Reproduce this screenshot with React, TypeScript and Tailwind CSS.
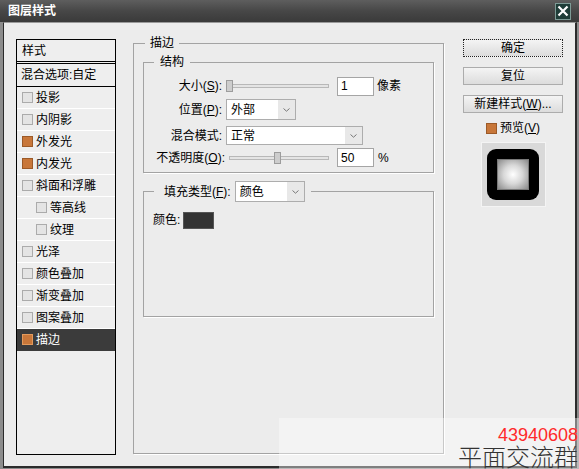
import React from "react";

const font = "font-['Liberation_Sans','Noto_Sans_CJK_SC',sans-serif]";

type Item = { label: string; on?: boolean; sub?: boolean; active?: boolean };

const items: Item[] = [
  { label: "投影" },
  { label: "内阴影" },
  { label: "外发光", on: true },
  { label: "内发光", on: true },
  { label: "斜面和浮雕" },
  { label: "等高线", sub: true },
  { label: "纹理", sub: true },
  { label: "光泽" },
  { label: "颜色叠加" },
  { label: "渐变叠加" },
  { label: "图案叠加" },
  { label: "描边", on: true, active: true },
];

const Check = ({ on, active }: { on?: boolean; active?: boolean }) => (
  <span
    className={
      active
        ? "w-[11px] h-[11px] shrink-0 bg-[#c8773a] border border-[#e39a5c]"
        : on
        ? "w-[11px] h-[11px] shrink-0 bg-[#c8773a] border border-[#9c5a28]"
        : "w-[11px] h-[11px] shrink-0 bg-[#e4e4e4] border border-[#ababab]"
    }
  />
);

const Chevron = () => (
  <svg width="7" height="4" viewBox="0 0 7 4">
    <path d="M0.5 0.5 L3.5 3.2 L6.5 0.5" fill="none" stroke="#777" strokeWidth="1" />
  </svg>
);

const Select = ({ value, className }: { value: string; className: string }) => (
  <div className={`flex bg-white border border-[#adadad] ${className}`}>
    <span className="flex-1 pl-[4px] flex items-center">{value}</span>
    <span className="w-[17px] bg-[#e8e8e8] flex items-center justify-center">
      <Chevron />
    </span>
  </div>
);

const Slider = ({ className, thumb }: { className: string; thumb: string }) => (
  <div className={`relative h-[12px] ${className}`}>
    <div className="absolute left-0 right-0 top-[4px] h-[4px] bg-[#e4e4e4] border border-[#b8b8b8]" />
    <div className={`absolute top-0 w-[7px] h-[12px] bg-[#cdcdcd] border border-[#9c9c9c] ${thumb}`} />
  </div>
);

const Field = ({ value }: { value: string }) => (
  <div className="ml-[8px] w-[37px] h-[19px] bg-white border border-[#a5a5a5] pl-[3px] flex items-center">
    {value}
  </div>
);

const Button = ({ children, focus }: { children: React.ReactNode; focus?: boolean }) => (
  <div
    className={`w-[100px] h-[18px] flex items-center justify-center bg-gradient-to-b from-[#f4f4f4] to-[#dcdcdc] border ${
      focus ? "border-dotted border-[#222]" : "border-[#acacac]"
    }`}
  >
    {children}
  </div>
);

export default function App() {
  return (
    <div className={`w-[579px] h-[469px] relative overflow-hidden bg-[#8c8c8c] text-[12px] text-black ${font}`}>
      <div className="h-[22px] flex items-center bg-gradient-to-b from-[#5e5e5e] via-[#474747] to-[#3a3a3a] pl-[8px] pr-[8px]">
        <span className="text-white font-bold text-[12px] leading-none">图层样式</span>
        <div className="ml-auto w-[16px] h-[17px] bg-[#1f3d38] border border-[#7d9a95] flex items-center justify-center">
          <svg width="12" height="12" viewBox="0 0 12 12">
            <path d="M1.5 1.5 L10.5 10.5 M10.5 1.5 L1.5 10.5" stroke="#fff" strokeWidth="2.2" />
          </svg>
        </div>
      </div>

      <div className="ml-[3px] w-[574px] h-[446px] bg-[#ececec] border-t border-t-[#9a9a9a] border-l border-l-[#2b2b2b] border-r-2 border-r-[#2b2b2b] border-b-2 border-b-[#2b2b2b] flex items-start pl-[12px] pt-[12px]">
        {/* style list */}
        <div className="mt-[4px] w-[100px] h-[416px] border border-black bg-[#eeeeee] flex flex-col">
          <div className="h-[22px] shrink-0 pl-[5px] flex items-center border-b border-black">样式</div>
          <div className="h-[1px] shrink-0" />
          <div className="h-[24px] shrink-0 pl-[4px] flex items-center border-y border-black">混合选项:自定</div>
          {items.map((it) => (
            <div
              key={it.label}
              className={`h-[22px] shrink-0 flex items-center gap-[3px] border-b ${
                it.active ? "bg-[#3b3b3b] text-white border-[#3b3b3b]" : "border-white"
              } ${it.sub ? "pl-[19px]" : "pl-[5px]"}`}
            >
              <Check on={it.on} active={it.active} />
              <span>{it.label}</span>
            </div>
          ))}
        </div>

        {/* stroke settings */}
        <fieldset className="ml-[17px] w-[311px] h-[419px] min-w-0 border border-[#a3a3a3] shadow-[1px_1px_0_#fff] px-[9px]">
          <legend className="ml-[2px] px-[5px] leading-[16px]">描边</legend>

          <fieldset className="mt-[3px] min-w-0 border border-[#a3a3a3] shadow-[1px_1px_0_#fff] pb-[5px]">
            <legend className="ml-[10px] px-[6px] leading-[16px]">结构</legend>

            <div className="mt-[6px] h-[20px] flex items-center">
              <span className="w-[78px] text-right">
                大小(<span className="underline">S</span>):
              </span>
              <Slider className="ml-[4px] w-[103px]" thumb="left-0" />
              <Field value="1" />
              <span className="ml-[3px]">像素</span>
            </div>

            <div className="mt-[3px] h-[21px] flex items-center">
              <span className="w-[78px] text-right">
                位置(<span className="underline">P</span>):
              </span>
              <Select value="外部" className="ml-[4px] w-[70px] h-[21px]" />
            </div>

            <div className="mt-[6px] h-[19px] flex items-center">
              <span className="w-[78px] text-right">混合模式:</span>
              <Select value="正常" className="ml-[4px] w-[137px] h-[19px]" />
            </div>

            <div className="mt-[3px] h-[19px] flex items-center">
              <span className="w-[81px] text-right">
                不透明度(<span className="underline">O</span>):
              </span>
              <Slider className="ml-[4px] w-[100px]" thumb="left-[45px]" />
              <Field value="50" />
              <span className="ml-[4px]">%</span>
            </div>
          </fieldset>

          <fieldset className="mt-[8px] h-[136px] min-w-0 border border-[#a3a3a3] shadow-[1px_1px_0_#fff]">
            <legend className="ml-[10px] pl-[10px] pr-[6px] flex items-center">
              <span>
                填充类型(<span className="underline">F</span>):
              </span>
              <Select value="颜色" className="ml-[4px] w-[70px] h-[21px]" />
            </legend>
            <div className="mt-[9px] pl-[9px] flex items-center">
              <span>颜色:</span>
              <span className="ml-[3px] w-[31px] h-[17px] bg-[#333333] border border-[#555555]" />
            </div>
          </fieldset>
        </fieldset>

        {/* buttons + preview */}
        <div className="mt-[4px] ml-[19px] w-[100px] flex flex-col items-center">
          <Button focus>确定</Button>
          <div className="mt-[10px]">
            <Button>复位</Button>
          </div>
          <div className="mt-[10px]">
            <Button>
              新建样式(<span className="underline">W</span>)...
            </Button>
          </div>
          <div className="mt-[8px] h-[14px] flex items-center gap-[3px]">
            <Check on />
            <span>
              预览(<span className="underline">V</span>)
            </span>
          </div>
          <div className="mt-[7px] w-[65px] h-[65px] bg-[#d9d9d9] border border-[#f4f4f4] flex items-center justify-center">
            <div className="w-[52px] h-[51px] rounded-[9px] bg-black flex items-center justify-center">
              <div className="w-[32px] h-[31px] border border-[#7a7a7a] bg-[radial-gradient(circle,#ffffff_0%,#d8d8d8_45%,#8a8a8a_100%)]" />
            </div>
          </div>
        </div>
      </div>

      {/* watermark */}
      <div className="absolute left-[279px] top-[418px] right-0 bottom-0 bg-white/40 flex flex-col items-end pt-[8px] pr-[1px]">
        <span className="text-[#ff2a2a] text-[18px] leading-[18px]">43940608</span>
        <span className="text-[#333333] text-[24px] leading-[24px] font-light font-['Noto_Sans_CJK_SC',sans-serif]">
          平面交流群
        </span>
      </div>
    </div>
  );
}
